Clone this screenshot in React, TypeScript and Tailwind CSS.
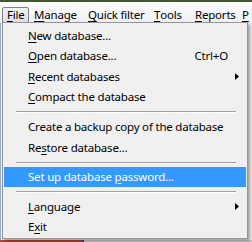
import React from "react";

type Item =
  | { kind: "sep" }
  | {
      kind: "item";
      pre: string;
      key?: string;
      post: string;
      shortcut?: string;
      submenu?: boolean;
      active?: boolean;
      h: 20 | 21;
    };

const items: Item[] = [
  { kind: "item", pre: "", key: "N", post: "ew database...", h: 21 },
  { kind: "item", pre: "", key: "O", post: "pen database...", shortcut: "Ctrl+O", h: 20 },
  { kind: "item", pre: "", key: "R", post: "ecent databases", submenu: true, h: 21 },
  { kind: "item", pre: "", key: "C", post: "ompact the database", h: 20 },
  { kind: "sep" },
  { kind: "item", pre: "Create a backup copy of the database", post: "", h: 21 },
  { kind: "item", pre: "Re", key: "s", post: "tore database...", h: 21 },
  { kind: "sep" },
  { kind: "item", pre: "Set up database ", key: "p", post: "assword...", active: true, h: 20 },
  { kind: "sep" },
  { kind: "item", pre: "", key: "L", post: "anguage", submenu: true, h: 21 },
  { kind: "item", pre: "E", key: "x", post: "it", h: 20 },
];

const bar = [
  { key: "F", rest: "ile", w: "w-[27px]", open: true },
  { key: "M", rest: "anage", w: "w-[54px]" },
  { key: "Q", rest: "uick filter", w: "w-[66px]" },
  { key: "T", rest: "ools", w: "w-[41px]" },
  { key: "R", rest: "eports", w: "w-[47px]" },
  { key: "P", rest: "", w: "w-[15px]" },
];

function Arrow() {
  return (
    <svg width="4" height="7" viewBox="0 0 4 7" className="block">
      <path d="M0 0 L4 3.5 L0 7 Z" fill="#000" />
    </svg>
  );
}

export default function App() {
  return (
    <div
      className="relative w-[252px] h-[242px] overflow-hidden bg-[#f0f0f0] text-[11.5px] tracking-[-0.2px] text-black"
      style={{ fontFamily: '"Noto Sans", "Open Sans", sans-serif' }}
    >
      {/* window frame strip */}
      <div className="h-[2px] bg-[#3f5a2c]" />

      {/* menu bar */}
      <div className="h-[21px] flex items-end pl-[2px] bg-gradient-to-b from-[#fdfdfd] to-[#eef0f3]">
        {bar.map((b) => (
          <div
            key={b.key}
            className={`${b.w} shrink-0 h-[16px] flex items-center leading-none whitespace-nowrap ${
              b.open
                ? "rounded-[2px] border border-[#7d7f8c] bg-gradient-to-b from-[#f1f2f6] to-[#dde0e8] pl-[4px]"
                : "pl-[5px]"
            }`}
          >
            <span className="underline underline-offset-[2px]">{b.key}</span>
            {b.rest}
          </div>
        ))}
      </div>

      {/* content behind the menu */}
      <div className="h-[217px] border-l border-[#9ab0d0]" />
      <div className="flex h-[2px]">
        <div className="w-[82px] bg-[#b5452f]" />
        <div className="w-[2px] bg-[#2f4b78]" />
        <div className="flex-1 bg-[#c9c9c9]" />
      </div>

      {/* dropdown */}
      <div className="absolute left-[2px] top-[22px] w-[246px] border border-[#979797] bg-[#f0f0f0] pt-[2px] pb-[1px] px-[1px] shadow-[2px_2px_3px_rgba(0,0,0,0.35)]">
        {items.map((it, i) =>
          it.kind === "sep" ? (
            <div key={i} className="h-[9px] flex items-center pl-[12px] pr-[10px]">
              <div className="w-full border-t border-[#a0a0a0] border-b border-b-white" />
            </div>
          ) : (
            <div
              key={i}
              className={`flex items-center pl-[24px] pr-[7px] whitespace-nowrap leading-none ${
                it.h === 21 ? "h-[21px]" : "h-[20px]"
              } ${it.active ? "bg-[#3399ff] text-white" : ""}`}
            >
              <span>
                {it.pre}
                {it.key && <span className="underline underline-offset-[2px]">{it.key}</span>}
                {it.post}
              </span>
              <span className="flex-1" />
              {it.shortcut && <span className="mr-[11px]">{it.shortcut}</span>}
              {it.submenu && <Arrow />}
            </div>
          )
        )}
      </div>
    </div>
  );
}
